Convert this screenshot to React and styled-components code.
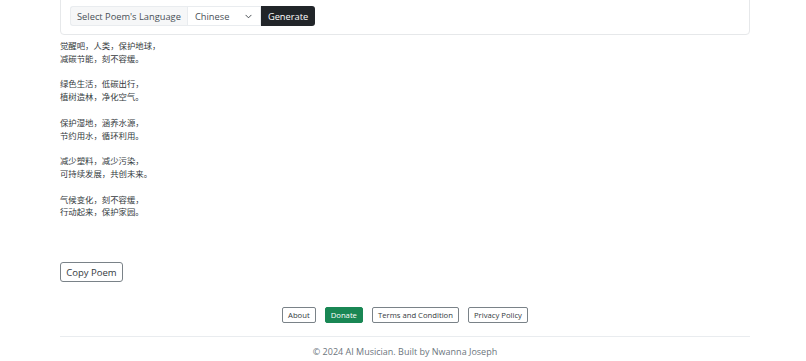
import styled, { createGlobalStyle } from 'styled-components';

const GlobalStyle = createGlobalStyle`
    html, body {
        margin: 0;
        padding: 0;
        background: #ffffff;
        font-family: "Open Sans", "Noto Sans CJK SC", sans-serif;
        color: #212529;
    }
`;

const Page = styled.div`
    width: 690px;
    margin: 0 0 0 60px;
    display: flex;
    flex-direction: column;
`;

const Card = styled.div`
    margin-top: -12px;
    border: 1px solid #e6e8ea;
    border-radius: 4px;
    padding: 17px 9px 8px 9px;
`;

const InputGroup = styled.div`
    display: flex;
    height: 20px;
`;

const Label = styled.div`
    display: flex;
    align-items: center;
    padding: 0 6px;
    background: #f6f7f8;
    border: 1px solid #e9ecef;
    border-right: none;
    border-radius: 3px 0 0 3px;
    font-size: 9.3px;
    color: #495057;
`;

const Select = styled.div`
    width: 74px;
    display: flex;
    align-items: center;
    justify-content: space-between;
    box-sizing: border-box;
    padding: 0 8px 0 7px;
    border: 1px solid #e9ecef;
    font-size: 9.3px;
    color: #495057;
`;

const Chevron = styled.svg`
    width: 7px;
    height: 7px;
`;

const DarkButton = styled.button`
    border: none;
    background: #212529;
    color: #ffffff;
    font-family: inherit;
    font-size: 9.3px;
    padding: 0 7px;
    border-radius: 0 3px 3px 0;
`;

const Poem = styled.div`
    margin-top: 4px;
    font-family: "Noto Sans CJK SC", sans-serif;
    font-size: 8.4px;
    line-height: 12.8px;
    color: #343a40;
    white-space: pre-line;
`;

const CopyButton = styled.button`
    align-self: flex-start;
    margin-top: 44px;
    height: 20px;
    width: 63px;
    padding: 0;
    background: #ffffff;
    border: 1px solid #7a8288;
    border-radius: 3px;
    font-family: inherit;
    font-size: 9.5px;
    color: #343a40;
`;

const Links = styled.div`
    margin-top: 25px;
    display: flex;
    justify-content: center;
    gap: 9px;
`;

const LinkButton = styled.button`
    height: 16px;
    padding: 0 5px;
    border-radius: 2px;
    font-family: inherit;
    font-size: 7.7px;
    border: 1px solid ${(props) => (props.primary ? '#198754' : '#7a8288')};
    background: ${(props) => (props.primary ? '#198754' : '#ffffff')};
    color: ${(props) => (props.primary ? '#ffffff' : '#343a40')};
`;

const Footer = styled.div`
    margin-top: 13px;
    border-top: 1px solid #e9ecef;
    padding-top: 8px;
    text-align: center;
    font-size: 9px;
    color: #6c757d;
`;

const poem = `觉醒吧，人类，保护地球，
减碳节能，刻不容缓。

绿色生活，低碳出行，
植树造林，净化空气。

保护湿地，涵养水源，
节约用水，循环利用。

减少塑料，减少污染，
可持续发展，共创未来。

气候变化，刻不容缓，
行动起来，保护家园。`;

const App = () => {
    return (
        <>
            <GlobalStyle />
            <Page>
                <Card>
                    <InputGroup>
                        <Label>Select Poem's Language</Label>
                        <Select>
                            <span>Chinese</span>
                            <Chevron viewBox="0 0 16 16">
                                <path d="M2 5l6 6 6-6" fill="none" stroke="#343a40" strokeWidth="2" strokeLinecap="round" strokeLinejoin="round" />
                            </Chevron>
                        </Select>
                        <DarkButton>Generate</DarkButton>
                    </InputGroup>
                </Card>
                <Poem>{poem}</Poem>
                <CopyButton>Copy Poem</CopyButton>
                <Links>
                    <LinkButton>About</LinkButton>
                    <LinkButton primary>Donate</LinkButton>
                    <LinkButton>Terms and Condition</LinkButton>
                    <LinkButton>Privacy Policy</LinkButton>
                </Links>
                <Footer>© 2024 AI Musician. Built by Nwanna Joseph</Footer>
            </Page>
        </>
    );
};

export default App;
